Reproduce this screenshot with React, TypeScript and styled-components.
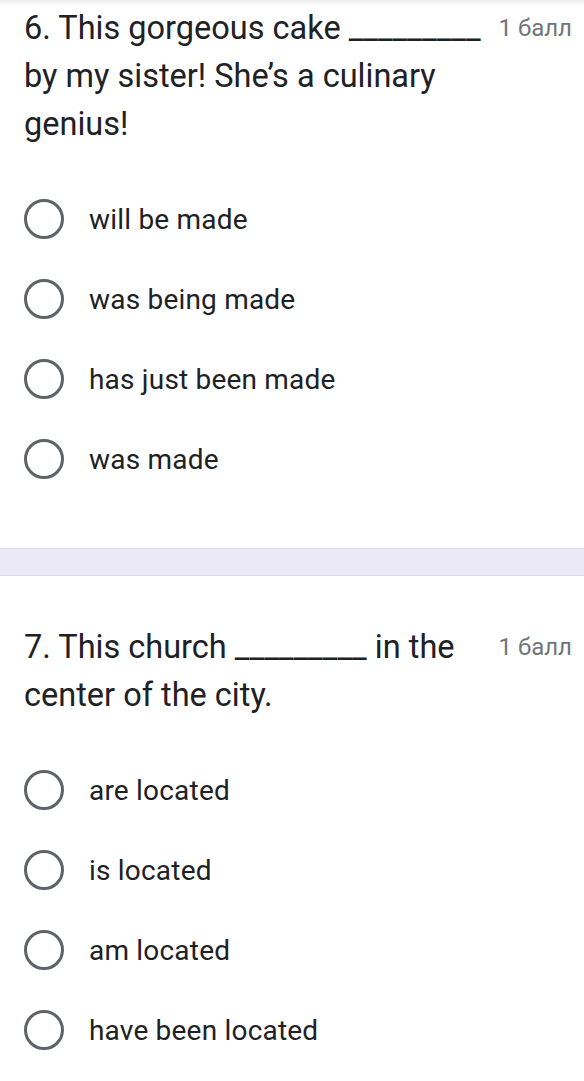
import styled, { createGlobalStyle } from "styled-components"

type Question = {
    id: number
    text: string
    points: string
    options: string[]
}

const questions: Question[] = [
    {
        id: 6,
        text: "6. This gorgeous cake _________ by my sister! She\u2019s a culinary genius!",
        points: "1 балл",
        options: ["will be made", "was being made", "has just been made", "was made"],
    },
    {
        id: 7,
        text: "7. This church _________ in the center of the city.",
        points: "1 балл",
        options: ["are located", "is located", "am located", "have been located"],
    },
]

const GlobalStyle = createGlobalStyle`
    html, body { margin: 0; padding: 0; background: #fff; }
    body { font-family: Roboto, "Noto Sans", Arial, sans-serif; }
`

const Page = styled.div`
    width: 584px;
    background: #fff;
    background-image: linear-gradient(#ececec, #fff 5px);
    background-repeat: no-repeat;
    background-size: 100% 6px;
`

const Card = styled.section<{ $top: number; $bottom: number }>`
    padding: ${p => p.$top}px 12px ${p => p.$bottom}px 24px;
`

const Header = styled.div`
    display: flex;
    align-items: flex-start;
    gap: 8px;
`

const Title = styled.div`
    flex: 1;
    font-size: 32.5px;
    line-height: 48px;
    color: #202124;
`

const Points = styled.span`
    font-size: 24px;
    line-height: 48px;
    color: #70757a;
    white-space: nowrap;
`

const Options = styled.div`
    margin-top: 31px;
    display: flex;
    flex-direction: column;
`

const Option = styled.label`
    display: flex;
    align-items: center;
    height: 80px;
    gap: 25px;
`

const Radio = styled.span`
    width: 40px;
    height: 40px;
    box-sizing: border-box;
    border: 3.5px solid #5f6368;
    border-radius: 50%;
    flex: none;
`

const OptionText = styled.span`
    font-size: 28px;
    color: #202124;
    letter-spacing: 0.2px;
`

const Divider = styled.div`
    height: 26px;
    background: #ece9f6;
    border-top: 1px solid #dcdae2;
    border-bottom: 1px solid #dcdae2;
`

export default function App() {
    return (
        <>
            <GlobalStyle />
            <Page>
                {questions.map((q, i) => (
                    <div key={q.id}>
                        {i > 0 && <Divider />}
                        <Card $top={i === 0 ? 4 : 47} $bottom={i === 0 ? 49 : 10}>
                            <Header>
                                <Title>{q.text}</Title>
                                <Points>{q.points}</Points>
                            </Header>
                            <Options>
                                {q.options.map(o => (
                                    <Option key={o}>
                                        <Radio />
                                        <OptionText>{o}</OptionText>
                                    </Option>
                                ))}
                            </Options>
                        </Card>
                    </div>
                ))}
            </Page>
        </>
    )
}
